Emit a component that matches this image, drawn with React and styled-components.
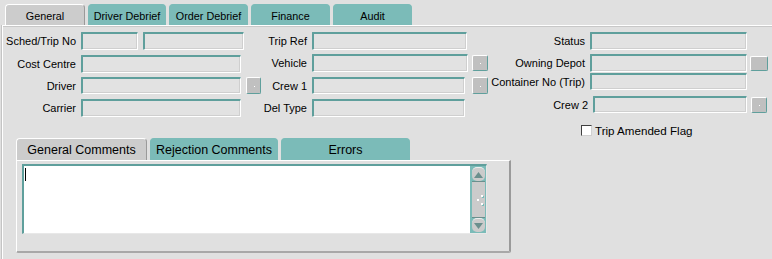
import React from 'react'
import styled, { createGlobalStyle } from 'styled-components'

const Global = createGlobalStyle`
  body {
    margin: 0;
    background: #e0e0e0;
    font-family: 'Liberation Sans', Arial, sans-serif;
    font-size: 11px;
    color: #000;
  }
`

const TEAL = '#7bbbb8'
const TEAL_DARK = '#5f9f9c'

function Field({ label, labelWidth, gap, top, height = 18, inputs, button }) {
  return (
    <Row $top={top} $height={height}>
      <Label $w={labelWidth}>{label}</Label>
      <Inputs $gap={gap}>
        {inputs.map((w, i) => (
          <Input key={i} $w={w} />
        ))}
      </Inputs>
      {button && <LovButton $w={button.w} $h={button.h} $left={button.left} $dot={button.dot} />}
    </Row>
  )
}

function ScrollArrow({ up }) {
  return (
    <svg width='9' height='6' viewBox='0 0 9 6'>
      <polygon points={up ? '0,6 9,6 4.5,0' : '0,0 9,0 4.5,6'} fill='#6b8f8d' />
    </svg>
  )
}

export default function App() {
  return (
    <Window>
      <Global />
      <TabStrip $pad={3} $height={25}>
        <Tab $w={80} $active>General</Tab>
        <Tab $w={78}>Driver Debrief</Tab>
        <Tab $w={79}>Order Debrief</Tab>
        <Tab $w={79}>Finance</Tab>
        <Tab $w={79}>Audit</Tab>
      </TabStrip>
      <Page>
        <Form>
          <Column $w={259}>
            <Field label='Sched/Trip No' labelWidth={73} gap={5} top={6} inputs={[57, 101]} />
            <Field label='Cost Centre' labelWidth={73} top={5} height={18} inputs={[160]} />
            <Field label='Driver' labelWidth={73} top={4} height={17} inputs={[160]}
              button={{ w: 15, h: 17, left: 5, dot: true }} />
            <Field label='Carrier' labelWidth={73} top={5} inputs={[160]} />
          </Column>
          <Column $w={227}>
            <Field label='Trip Ref' labelWidth={45} top={6} inputs={[155]} />
            <Field label='Vehicle' labelWidth={45} top={4} inputs={[156]}
              button={{ w: 16, h: 16, left: 4, dot: true }} />
            <Field label='Crew 1' labelWidth={45} top={5} height={17} inputs={[153]}
              button={{ w: 16, h: 17, left: 7, dot: true }} />
            <Field label='Del Type' labelWidth={45} top={5} inputs={[153]} />
          </Column>
          <Column>
            <Field label='Status' labelWidth={96} top={6} inputs={[157]} />
            <Field label='Owning Depot' labelWidth={96} top={4} inputs={[157]}
              button={{ w: 18, h: 15, left: 3 }} />
            <Field label='Container No (Trip)' labelWidth={96} top={1} height={17} inputs={[157]} />
            <Field label='Crew 2' labelWidth={99} top={6} height={17} inputs={[154]}
              button={{ w: 16, h: 16, left: 4, dot: true }} />
            <CheckRow>
              <CheckBox />
              <span>Trip Amended Flag</span>
            </CheckRow>
          </Column>
        </Form>
        <Comments>
          <TabStrip $pad={0} $height={22} $size={12.5}>
            <Tab $w={131} $active $h={22}>General Comments</Tab>
            <Tab $w={128} $h={22}>Rejection Comments</Tab>
            <Tab $w={129} $h={22}>Errors</Tab>
          </TabStrip>
          <CommentBody>
            <TextArea>
              <Caret />
              <ScrollBar>
                <ScrollButton><ScrollArrow up /></ScrollButton>
                <Thumb>
                  <Grip />
                </Thumb>
                <ScrollButton><ScrollArrow /></ScrollButton>
              </ScrollBar>
            </TextArea>
          </CommentBody>
        </Comments>
      </Page>
    </Window>
  )
}

const Window = styled.div`
  width: 772px;
  height: 259px;
  overflow: hidden;
  padding-left: 2px;
  box-sizing: border-box;
`

const TabStrip = styled.div`
  display: flex;
  align-items: flex-end;
  gap: 3px;
  height: ${({ $height }) => $height}px;
  padding-left: ${({ $pad }) => $pad}px;
  font-size: ${({ $size }) => $size || 10.8}px;
`

const Tab = styled.div`
  width: ${({ $w }) => $w}px;
  height: ${({ $h }) => $h || 21}px;
  box-sizing: border-box;
  display: flex;
  align-items: center;
  justify-content: center;
  background: ${({ $active }) => ($active ? '#cccccc' : TEAL)};
  border-radius: 4px 4px 0 0;
  border-top: 1px solid ${({ $active }) => ($active ? '#ffffff' : TEAL)};
  border-left: 1px solid ${({ $active }) => ($active ? '#ffffff' : TEAL)};
  border-right: 1px solid ${({ $active }) => ($active ? '#9a9a9a' : TEAL)};
  padding-top: 1px;
  white-space: nowrap;
`

const Page = styled.div`
  border-top: 1px solid #ffffff;
  border-left: 1px solid #ffffff;
  box-shadow: -1px 0 0 #c4c4c4, 0 1px 0 #c8c8c8 inset;
  height: 240px;
  box-sizing: border-box;
`

const Form = styled.div`
  display: flex;
  height: 112px;
`

const Column = styled.div`
  display: flex;
  flex-direction: column;
  width: ${({ $w }) => ($w ? `${$w}px` : 'auto')};
  flex: ${({ $w }) => ($w ? 'none' : '1')};
`

const Row = styled.div`
  display: flex;
  align-items: center;
  height: ${({ $height }) => $height}px;
  margin-top: ${({ $top }) => $top}px;
`

const Label = styled.div`
  width: ${({ $w }) => $w}px;
  flex: none;
  text-align: right;
  white-space: nowrap;
  padding-right: 5px;
  box-sizing: content-box;
`

const Inputs = styled.div`
  display: flex;
  gap: ${({ $gap }) => $gap || 0}px;
  height: 100%;
`

const Input = styled.div`
  width: ${({ $w }) => $w}px;
  height: 100%;
  box-sizing: border-box;
  background: #e2e2e2;
  border-top: 2px solid ${TEAL_DARK};
  border-left: 2px solid ${TEAL_DARK};
  border-right: 1px solid #ffffff;
  border-bottom: 1px solid #ffffff;
  border-radius: 1px;
  box-shadow: inset -1px -1px 0 #cfcfcf;
`

const LovButton = styled.div`
  position: relative;
  flex: none;
  width: ${({ $w }) => $w}px;
  height: ${({ $h }) => $h}px;
  margin-left: ${({ $left }) => $left}px;
  box-sizing: border-box;
  background: #c0c0c0;
  border-top: 1px solid #ffffff;
  border-left: 1px solid #ffffff;
  border-right: 1px solid ${TEAL_DARK};
  border-bottom: 1px solid ${TEAL_DARK};
  border-radius: 2px;
  &::after {
    content: '';
    display: ${({ $dot }) => ($dot ? 'block' : 'none')};
    position: absolute;
    left: 50%;
    top: 50%;
    width: 1px;
    height: 1px;
    background: #ffffff;
  }
`

const CheckRow = styled.div`
  display: flex;
  align-items: center;
  gap: 3px;
  margin-top: 11px;
  padding-left: 92px;
  font-size: 11.6px;
`

const CheckBox = styled.div`
  width: 11px;
  height: 11px;
  box-sizing: border-box;
  background: #ffffff;
  border-top: 1px solid #404040;
  border-left: 1px solid #404040;
  border-right: 1px solid #d0d0d0;
  border-bottom: 1px solid #d0d0d0;
`

const Comments = styled.div`
  margin-left: 13px;
  width: 495px;
`

const CommentBody = styled.div`
  height: 93px;
  box-sizing: border-box;
  border-top: 1px solid #ffffff;
  border-left: 1px solid #ffffff;
  border-right: 2px solid #9a9a9a;
  border-bottom: 2px solid #a8a8a8;
  border-radius: 0 0 2px 2px;
  padding: 3px 0 0 5px;
`

const TextArea = styled.div`
  position: relative;
  width: 465px;
  height: 70px;
  box-sizing: border-box;
  background: #ffffff;
  border-top: 2px solid ${TEAL_DARK};
  border-left: 2px solid ${TEAL_DARK};
  border-right: 1px solid #e8e8e8;
  border-bottom: 1px solid #e8e8e8;
  display: flex;
  justify-content: flex-end;
`

const Caret = styled.div`
  position: absolute;
  left: 1px;
  top: 2px;
  width: 1px;
  height: 13px;
  background: #000;
`

const ScrollBar = styled.div`
  width: 16px;
  height: 100%;
  background: ${TEAL};
  display: flex;
  flex-direction: column;
  align-items: center;
  padding: 1px 0;
  box-sizing: border-box;
`

const ScrollButton = styled.div`
  width: 13px;
  height: 14px;
  background: #cbcbcb;
  border-radius: 5px;
  display: flex;
  align-items: center;
  justify-content: center;
  border-top: 1px solid #eeeeee;
  box-sizing: border-box;
`

const Thumb = styled.div`
  flex: 1;
  width: 13px;
  background: #cbcbcb;
  border-top: 1px solid #6b8f8d;
  border-bottom: 1px solid #6b8f8d;
  box-sizing: border-box;
  display: flex;
  align-items: center;
  justify-content: center;
`

const Grip = styled.div`
  width: 2px;
  height: 2px;
  background: #ffffff;
  box-shadow: 4px -4px 0 #ffffff, 4px 4px 0 #ffffff, 5px -3px 0 #7bbbb8, 5px 5px 0 #7bbbb8;
`
